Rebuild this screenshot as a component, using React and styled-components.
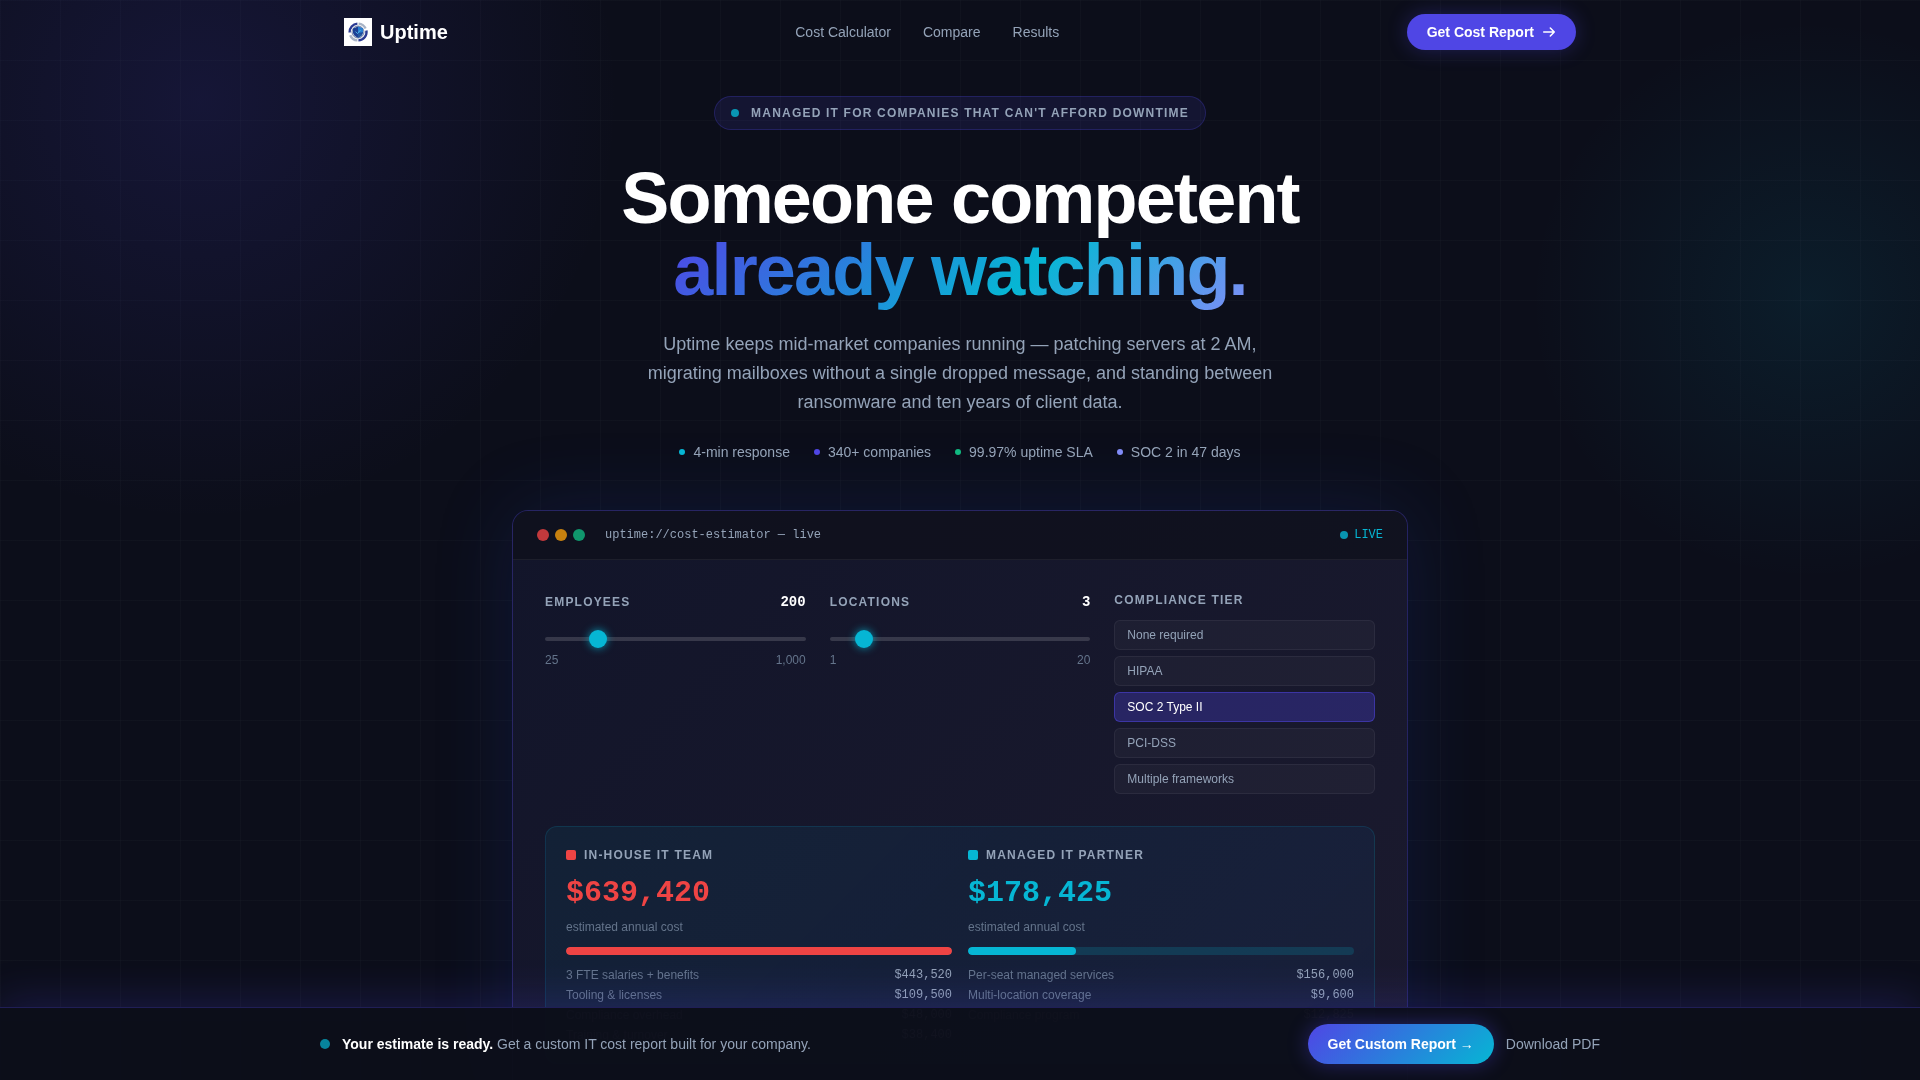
import React, { useState } from "react"
import styled, { createGlobalStyle } from "styled-components"

const theme = {
  bg: "#0c0e1a",
  text: "#94a3b8",
  muted: "#64748b",
  white: "#ffffff",
  indigo: "#4f46e5",
  cyan: "#06b6d4",
  violet: "#818cf8",
  red: "#ef4444",
  amber: "#f59e0b",
  green: "#10b981",
  sans: `"Liberation Sans", Arial, sans-serif`,
  mono: `"Liberation Mono", "Courier New", monospace`,
}

const GlobalStyle = createGlobalStyle`
  * {
    box-sizing: border-box;
  }
  body {
    margin: 0;
    background: ${theme.bg};
    color: ${theme.text};
    font-family: ${theme.sans};
    font-size: 14px;
    line-height: 20px;
    overflow-x: hidden;
  }
  h1, p {
    margin: 0;
  }
  a {
    color: inherit;
    text-decoration: none;
  }
  button {
    font-family: inherit;
    cursor: pointer;
  }
`

const Page = styled.div`
  position: relative;
  overflow: hidden;
  min-height: 100vh;
  padding-bottom: 120px;
`

const Backdrop = styled.div`
  position: fixed;
  inset: 0;
  z-index: -1;
  background:
    linear-gradient(rgba(148, 163, 184, 0.03) 1px, transparent 1px) 0 0 / 60px 60px,
    linear-gradient(90deg, rgba(148, 163, 184, 0.03) 1px, transparent 1px) 0 0 / 60px 60px,
    radial-gradient(circle at 200px 100px, rgba(79, 70, 229, 0.14), transparent 420px),
    radial-gradient(circle at calc(100% - 110px) 300px, rgba(6, 182, 212, 0.09), transparent 280px),
    ${theme.bg};
`

const Nav = styled.nav`
  display: flex;
  align-items: center;
  justify-content: space-between;
  max-width: 1280px;
  height: 64px;
  margin: 0 auto;
  padding: 0 24px;
`

const Brand = styled.a`
  display: flex;
  align-items: center;
  gap: 8px;
  color: ${theme.white};
  font-size: 20px;
  font-weight: 700;
  line-height: 28px;
`

const NavLinks = styled.div`
  display: flex;
  gap: 32px;
`

const NavButton = styled.button`
  display: flex;
  align-items: center;
  gap: 8px;
  padding: 8px 20px;
  border: 0;
  border-radius: 18px;
  background: ${theme.indigo};
  box-shadow: 0 0 20px rgba(79, 70, 229, 0.3);
  color: ${theme.white};
  font-size: 14px;
  font-weight: 700;
  line-height: 20px;
`

const Hero = styled.header`
  display: flex;
  flex-direction: column;
  align-items: center;
  padding: 32px 24px 48px;
  text-align: center;
`

const Dot = styled.span`
  flex: none;
  width: ${(p) => p.$size}px;
  height: ${(p) => p.$size}px;
  border-radius: 50%;
  background: ${(p) => p.$color};
  opacity: ${(p) => p.$opacity || 1};
`

const Label = styled.span`
  color: ${theme.text};
  font-size: 12px;
  font-weight: 700;
  line-height: 16px;
  letter-spacing: 0.1em;
  text-transform: uppercase;
`

const Badge = styled.div`
  display: flex;
  align-items: center;
  gap: 12px;
  padding: 8px 16px;
  border: 1px solid rgba(79, 70, 229, 0.25);
  border-radius: 17px;
  background: rgba(79, 70, 229, 0.12);
`

const Title = styled.h1`
  margin: 32px 0 24px;
  color: ${theme.white};
  font-size: 72px;
  font-weight: 700;
  line-height: 72px;
  letter-spacing: -0.025em;
`

const Gradient = styled.span`
  display: table;
  margin: 0 auto -12px;
  padding-bottom: 12px;
  background: linear-gradient(135deg, ${theme.indigo} 0%, ${theme.cyan} 60%, ${theme.violet} 100%);
  background-clip: text;
  -webkit-background-clip: text;
  color: transparent;
`

const Lead = styled.p`
  max-width: 672px;
  font-size: 18px;
  line-height: 29px;
`

const Stats = styled.div`
  display: flex;
  flex-wrap: wrap;
  justify-content: center;
  gap: 24px;
  margin-top: 25px;
`

const Stat = styled.span`
  display: flex;
  align-items: center;
  gap: 8px;
`

const Card = styled.section`
  max-width: 896px;
  margin: 0 auto;
  overflow: hidden;
  border: 1px solid rgba(79, 70, 229, 0.3);
  border-radius: 16px;
  background: linear-gradient(135deg, #12152a 0%, #1b1a2e 100%);
  box-shadow: 0 0 80px rgba(30, 64, 175, 0.2);
`

const CardHeader = styled.div`
  display: flex;
  align-items: center;
  justify-content: space-between;
  padding: 16px 24px;
  border-bottom: 1px solid rgba(255, 255, 255, 0.06);
  background: rgba(14, 15, 26, 0.7);
  font-family: ${theme.mono};
  font-size: 12px;
  line-height: 16px;
`

const Lights = styled.div`
  display: flex;
  align-items: center;
  gap: 6px;
  margin-right: 20px;
`

const HeaderSide = styled.div`
  display: flex;
  align-items: center;
`

const Live = styled.span`
  display: flex;
  align-items: center;
  gap: 6px;
  color: ${theme.cyan};
`

const CardBody = styled.div`
  padding: 32px;
`

const Controls = styled.div`
  display: grid;
  grid-template-columns: repeat(3, 1fr);
  gap: 24px;
  margin-bottom: 32px;
`

const Split = styled.div`
  display: flex;
  align-items: center;
  justify-content: space-between;
`

const Value = styled.output`
  color: ${theme.white};
  font-family: ${theme.mono};
  font-size: 14px;
  font-weight: 700;
`

const Range = styled.input`
  display: block;
  width: 100%;
  height: 18px;
  margin: 18px 0 4px;
  appearance: none;
  background: transparent;

  &::-webkit-slider-runnable-track {
    height: 4px;
    border-radius: 2px;
    background: rgba(255, 255, 255, 0.15);
  }

  &::-webkit-slider-thumb {
    appearance: none;
    width: 18px;
    height: 18px;
    margin-top: -7px;
    border-radius: 50%;
    background: ${theme.cyan};
    box-shadow: 0 0 8px rgba(6, 182, 212, 0.8);
  }
`

const Ends = styled(Split)`
  color: ${theme.muted};
  font-size: 12px;
  line-height: 16px;
`

const Tiers = styled.div`
  display: flex;
  flex-direction: column;
  gap: 6px;
`

const TierLabel = styled(Label)`
  margin-bottom: 6px;
`

const Tier = styled.button`
  padding: 6px 12px;
  border: 1px solid ${(p) => (p.$active ? "rgba(79, 70, 229, 0.5)" : "rgba(255, 255, 255, 0.06)")};
  border-radius: 6px;
  background: ${(p) => (p.$active ? "rgba(79, 70, 229, 0.3)" : "rgba(255, 255, 255, 0.03)")};
  color: ${(p) => (p.$active ? theme.white : theme.text)};
  font-size: 12px;
  line-height: 16px;
  text-align: left;
`

const Results = styled.div`
  display: grid;
  grid-template-columns: 1fr 1fr;
  gap: 16px;
  padding: 20px;
  border: 1px solid rgba(6, 182, 212, 0.15);
  border-radius: 12px;
  background: linear-gradient(135deg, rgba(6, 182, 212, 0.07), rgba(12, 74, 150, 0.12));
`

const ResultHead = styled.div`
  display: flex;
  align-items: center;
  gap: 8px;
`

const Swatch = styled.span`
  width: 10px;
  height: 10px;
  border-radius: 2px;
  background: ${(p) => p.$color};
`

const Amount = styled.p`
  margin: 12px 0 8px;
  color: ${(p) => p.$color};
  font-family: ${theme.mono};
  font-size: 30px;
  font-weight: 700;
  line-height: 36px;
`

const Caption = styled.p`
  color: ${theme.muted};
  font-size: 12px;
  line-height: 16px;
`

const Bar = styled.div`
  height: 8px;
  margin: 12px 0;
  overflow: hidden;
  border-radius: 4px;
  background: rgba(6, 182, 212, 0.18);
`

const BarFill = styled.div`
  height: 100%;
  border-radius: 4px;
  background: ${(p) => p.$color};
`

const Lines = styled.div`
  display: flex;
  flex-direction: column;
  gap: 4px;
  color: ${theme.muted};
  font-size: 12px;
  line-height: 16px;
`

const Price = styled.span`
  color: ${theme.text};
  font-family: ${theme.mono};
`

const StickyBar = styled.div`
  position: fixed;
  right: 0;
  bottom: 0;
  left: 0;
  border-top: 1px solid rgba(79, 70, 229, 0.3);
  background: rgba(12, 14, 26, 0.97);
  box-shadow: 0 -8px 40px rgba(79, 70, 229, 0.2);
`

const StickyInner = styled.div`
  display: flex;
  align-items: center;
  justify-content: space-between;
  max-width: 1280px;
  margin: 0 auto;
  padding: 16px 0;
`

const StickyGroup = styled.div`
  display: flex;
  align-items: center;
  gap: 12px;
`

const Strong = styled.strong`
  color: ${theme.white};
`

const ReportButton = styled.button`
  padding: 10px 20px;
  border: 0;
  border-radius: 20px;
  background: linear-gradient(135deg, ${theme.indigo}, ${theme.cyan});
  box-shadow: 0 0 20px rgba(79, 70, 229, 0.4);
  color: ${theme.white};
  font-size: 14px;
  font-weight: 700;
  line-height: 20px;
`

const Logo = () => (
  <svg width="28" height="28" viewBox="0 0 28 28" aria-hidden="true">
    <rect width="28" height="28" fill="#fff" />
    <g fill="none" strokeWidth="2.4">
      <path d="M5.6 14.5A8.4 8.4 0 0 1 13.4 5.6" stroke="#2b3a92" />
      <path d="M14.6 5.6a8.4 8.4 0 0 1 7 5" stroke="#a9b4c6" />
      <path d="M22.4 12.5a8.4 8.4 0 0 1-8 9.9" stroke="#2b3a92" />
      <path d="M13.4 22.4a8.4 8.4 0 0 1-7.2-5.2" stroke="#a9b4c6" />
    </g>
    <circle cx="14" cy="14" r="6" fill="#dfe6f0" stroke="#6f80a5" strokeWidth="1" />
    <path d="M14 8.6l5 1.8v3.8c0 2.6-2 4.4-5 5.6-3-1.2-5-3-5-5.6v-3.8z" fill="#1b3f94" />
    <path d="M14 8.6l5 1.8v3.8L14 15z" fill="#2a7fd0" />
    <path d="M14 15l4.6.8c-.7 1.8-2.3 3-4.6 4z" fill="#22589f" />
    <path d="M11.5 13.6l2 2 3-3.6" fill="none" stroke="#4fb4e6" strokeWidth="1" />
  </svg>
)

const Arrow = () => (
  <svg width="14" height="14" viewBox="0 0 16 16" fill="none" aria-hidden="true">
    <path
      d="M2 8h12M9.5 3.5L14 8l-4.5 4.5"
      stroke="currentColor"
      strokeWidth="1.8"
      strokeLinecap="round"
      strokeLinejoin="round"
    />
  </svg>
)

const stats = [
  { text: "4-min response", color: theme.cyan },
  { text: "340+ companies", color: theme.indigo },
  { text: "99.97% uptime SLA", color: theme.green },
  { text: "SOC 2 in 47 days", color: theme.violet },
]

const tiers = ["None required", "HIPAA", "SOC 2 Type II", "PCI-DSS", "Multiple frameworks"]

const results = [
  {
    name: "In-house IT team",
    color: theme.red,
    total: 639420,
    lines: [
      ["3 FTE salaries + benefits", 443520],
      ["Tooling & licenses", 109500],
      ["Compliance overhead", 48000],
      ["Training & turnover", 38400],
    ],
  },
  {
    name: "Managed IT partner",
    color: theme.cyan,
    total: 178425,
    lines: [
      ["Per-seat managed services", 156000],
      ["Multi-location coverage", 9600],
      ["Compliance program", 12825],
    ],
  },
]

const money = (n) => `$${n.toLocaleString("en-US")}`
const highest = Math.max(...results.map((r) => r.total))

const Slider = ({ id, label, min, max, initial }) => {
  const [value, setValue] = useState(initial)
  return (
    <div>
      <Split>
        <Label as="label" htmlFor={id}>
          {label}
        </Label>
        <Value htmlFor={id}>{value}</Value>
      </Split>
      <Range
        id={id}
        type="range"
        min={min}
        max={max}
        value={value}
        onChange={(e) => setValue(Number(e.target.value))}
      />
      <Ends>
        <span>{min}</span>
        <span>{max.toLocaleString("en-US")}</span>
      </Ends>
    </div>
  )
}

const Estimator = () => {
  const [tier, setTier] = useState("SOC 2 Type II")
  return (
    <Card id="calculator">
      <CardHeader>
        <HeaderSide>
          <Lights>
            <Dot $size={12} $color={theme.red} $opacity={0.8} />
            <Dot $size={12} $color={theme.amber} $opacity={0.8} />
            <Dot $size={12} $color={theme.green} $opacity={0.8} />
          </Lights>
          <span>uptime://cost-estimator — live</span>
        </HeaderSide>
        <Live>
          <Dot $size={8} $color={theme.cyan} $opacity={0.8} />
          LIVE
        </Live>
      </CardHeader>
      <CardBody>
        <Controls>
          <Slider id="employees" label="Employees" min={25} max={1000} initial={200} />
          <Slider id="locations" label="Locations" min={1} max={20} initial={3} />
          <Tiers role="group" aria-labelledby="tier-label">
            <TierLabel id="tier-label">Compliance tier</TierLabel>
            {tiers.map((t) => (
              <Tier key={t} type="button" $active={t === tier} aria-pressed={t === tier} onClick={() => setTier(t)}>
                {t}
              </Tier>
            ))}
          </Tiers>
        </Controls>
        <Results>
          {results.map((r) => (
            <div key={r.name}>
              <ResultHead>
                <Swatch $color={r.color} />
                <Label>{r.name}</Label>
              </ResultHead>
              <Amount $color={r.color}>{money(r.total)}</Amount>
              <Caption>estimated annual cost</Caption>
              <Bar>
                <BarFill $color={r.color} style={{ width: `${(r.total / highest) * 100}%` }} />
              </Bar>
              <Lines>
                {r.lines.map(([name, cost]) => (
                  <Split key={name}>
                    <span>{name}</span>
                    <Price>{money(cost)}</Price>
                  </Split>
                ))}
              </Lines>
            </div>
          ))}
        </Results>
      </CardBody>
    </Card>
  )
}

const App = () => (
  <>
    <GlobalStyle />
    <Backdrop />
    <Page>
      <Nav>
        <Brand href="#">
          <Logo />
          Uptime
        </Brand>
        <NavLinks>
          <a href="#calculator">Cost Calculator</a>
          <a href="#compare">Compare</a>
          <a href="#results">Results</a>
        </NavLinks>
        <NavButton type="button">
          Get Cost Report
          <Arrow />
        </NavButton>
      </Nav>
      <Hero>
        <Badge>
          <Dot $size={8} $color={theme.cyan} $opacity={0.8} />
          <Label>Managed IT for companies that can't afford downtime</Label>
        </Badge>
        <Title>
          Someone competent
          <Gradient>already watching.</Gradient>
        </Title>
        <Lead>
          Uptime keeps mid-market companies running — patching servers at 2 AM,
          migrating mailboxes without a single dropped message, and standing
          between ransomware and ten years of client data.
        </Lead>
        <Stats>
          {stats.map((s) => (
            <Stat key={s.text}>
              <Dot $size={6} $color={s.color} />
              {s.text}
            </Stat>
          ))}
        </Stats>
      </Hero>
      <Estimator />
    </Page>
    <StickyBar>
      <StickyInner>
        <StickyGroup>
          <Dot $size={10} $color={theme.cyan} $opacity={0.7} />
          <span>
            <Strong>Your estimate is ready.</Strong> Get a custom IT cost report built for your company.
          </span>
        </StickyGroup>
        <StickyGroup>
          <ReportButton type="button">Get Custom Report →</ReportButton>
          <a href="#pdf">Download PDF</a>
        </StickyGroup>
      </StickyInner>
    </StickyBar>
  </>
)

export default App
